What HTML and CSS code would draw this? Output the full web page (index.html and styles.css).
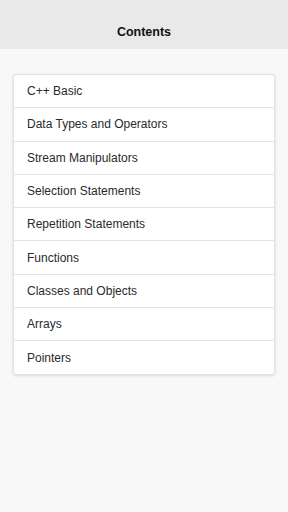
FILE: index.html
```html
<!DOCTYPE html>
<html>
<head>
	<title>Contents</title>
	<link rel="stylesheet" href="styles.css">
</head>
<body>
<div class="header">Contents</div>
<div class="content">
	<ul class="list">
		<li>C++ Basic</li>
		<li>Data Types and Operators</li>
		<li>Stream Manipulators</li>
		<li>Selection Statements</li>
		<li>Repetition Statements</li>
		<li>Functions</li>
		<li>Classes and Objects</li>
		<li>Arrays</li>
		<li>Pointers</li>
	</ul>
</div>
</body>
</html>
```

FILE: styles.css
```css
*{
	margin: 0;
	padding: 0;
	box-sizing: border-box;
}
html, body {
	height: 100%;
}
body {
	background: #f8f8f8;
	font-family: "Liberation Sans", Arial, sans-serif;
	color: #2a2a2a;
}
.header {
	display: flex;
	align-items: center;
	justify-content: center;
	height: 49px;
	padding-top: 15px;
	background: #e9e9e9;
	font-size: 12.5px;
	font-weight: bold;
	color: #111;
}
.content {
	padding: 25px 13px;
}
.list {
	list-style: none;
	background: #fff;
	border: 1px solid #e2e2e2;
	border-radius: 3px;
	box-shadow: 0 1px 3px rgba(0, 0, 0, 0.12);
}
.list li {
	display: flex;
	align-items: center;
	height: 33.3px;
	padding-left: 13px;
	font-size: 12px;
	border-bottom: 1px solid #e4e4e4;
}
.list li:last-child {
	height: 32.6px;
	border-bottom: none;
}
```
